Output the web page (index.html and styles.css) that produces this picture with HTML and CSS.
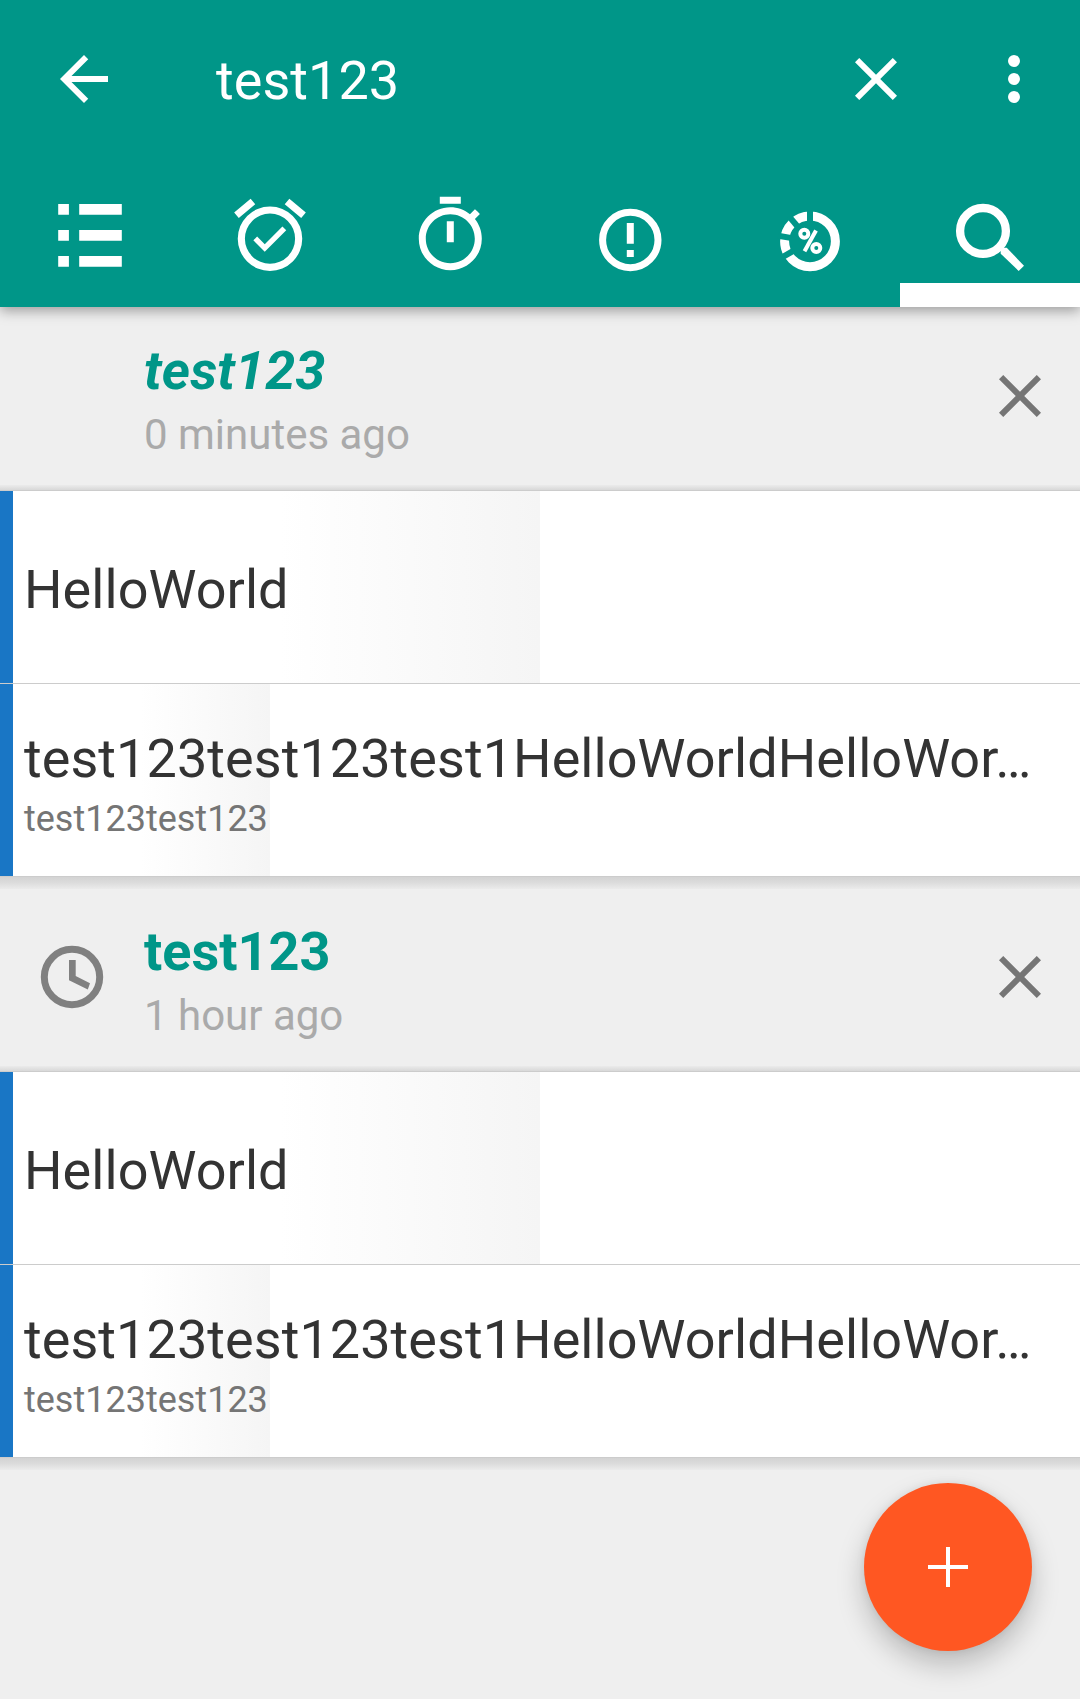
FILE: index.html
```html
<!DOCTYPE html>
<html lang="en">
<head>
<meta charset="utf-8">
<title>Search</title>
<link rel="stylesheet" href="styles.css">
</head>
<body>
<svg class="defs" aria-hidden="true">
  <symbol id="close" viewBox="0 0 24 24"><path d="M19 6.41 17.59 5 12 10.59 6.41 5 5 6.41 10.59 12 5 17.59 6.41 19 12 13.41 17.59 19 19 17.59 13.41 12z"/></symbol>
</svg>
<header class="app-bar">
  <div class="toolbar">
    <svg class="icon back" viewBox="0 0 24 24"><path d="M20 11H7.83l5.59-5.59L12 4l-8 8 8 8 1.41-1.41L7.83 13H20v-2z"/></svg>
    <div class="query">test123</div>
    <svg class="icon"><use href="#close"/></svg>
    <svg class="icon more" viewBox="0 0 24 24"><path d="M12 8a2 2 0 1 0 0-4 2 2 0 0 0 0 4zm0 2a2 2 0 1 0 0 4 2 2 0 0 0 0-4zm0 6a2 2 0 1 0 0 4 2 2 0 0 0 0-4z"/></svg>
  </div>
  <nav class="tabs">
    <a class="tab"><svg viewBox="0 168 180 139"><path d="M58.200 204h10.700v10.800H58.200zM79.200 204h42.600v10.800H79.200zM58.200 230h10.700v10.800H58.200zM79.200 230h42.600v10.800H79.200zM58.200 256h10.700v10.800H58.200zM79.200 256h42.600v10.800H79.200z"/></svg></a>
    <a class="tab"><svg viewBox="0 168 180 139"><path transform="translate(47 192.100) scale(3.583)" d="M10.540 14.530 8.410 12.400 7.350 13.460 10.530 16.640 16.530 10.640 15.470 9.580zM12 20a7 7 0 0 1 0-14 7 7 0 0 1 0 14M12 4a9 9 0 0 0 0 18 9 9 0 0 0 0-18M7.880 3.390 6.600 1.860 2 5.710 3.290 7.240zM22 5.720 17.400 1.860 16.110 3.390 20.710 7.250z"/></svg></a>
    <a class="tab"><svg viewBox="0 168 180 139"><path transform="translate(48.300 193.200) scale(3.500)" d="M15 1H9v2h6V1zm-4 13h2V8h-2v6zm8.030-6.610 1.420-1.420c-.43-.51-.9-.99-1.410-1.410l-1.420 1.420C16.070 4.740 14.120 4 12 4c-4.970 0-9 4.030-9 9s4.020 9 9 9 9-4.030 9-9c0-2.120-.74-4.070-1.970-5.610zM12 20c-3.870 0-7-3.130-7-7s3.130-7 7-7 7 3.130 7 7-3.130 7-7 7z"/></svg></a>
    <a class="tab"><svg viewBox="0 168 180 139"><circle class="ring" cx="90.300" cy="240" r="27.700" stroke-width="7"/><path d="M86.800 223h7v20.700h-7zM86.800 250h7v7h-7z"/></svg></a>
    <a class="tab"><svg viewBox="0 168 180 139"><circle class="ring" cx="90" cy="241.300" r="25.400" stroke-width="9"/><g class="cuts"><path id="cut" d="M90 209v14"/><use href="#cut" transform="rotate(-40 90 241.300)"/><use href="#cut" transform="rotate(-80 90 241.300)"/><use href="#cut" transform="rotate(-120 90 241.300)"/></g><g class="percent"><circle cx="84.300" cy="233.700" r="4"/><circle cx="96.300" cy="248" r="4"/><path d="M96 230.500 84.500 251.200"/></g></svg></a>
    <a class="tab active"><svg viewBox="0 168 180 139"><circle class="ring" cx="83" cy="230.900" r="22.900" stroke-width="8.300"/><path d="M102.700 247.700h4L124 265.700l-5.300 5.300-18-17.300V250z"/></svg></a>
  </nav>
</header>
<main class="results">
  <section class="group">
    <div class="group-head">
      <div class="lead"></div>
      <div class="info"><h2 class="name recent">test123</h2><p class="when">0 minutes ago</p></div>
      <svg class="icon"><use href="#close"/></svg>
    </div>
    <div class="card">
      <div class="row half"><div class="title">HelloWorld</div></div>
      <div class="row quarter"><div class="title">test123test123test1HelloWorldHelloWor…</div><div class="note">test123test123</div></div>
    </div>
  </section>
  <section class="group">
    <div class="group-head">
      <div class="lead"><svg class="clock" viewBox="0 0 64 64"><circle cx="32" cy="32" r="27.700"/><path d="M29 15h6.700v16L50 38.300l-2.200 6.300L29 35.300z"/></svg></div>
      <div class="info"><h2 class="name">test123</h2><p class="when">1 hour ago</p></div>
      <svg class="icon"><use href="#close"/></svg>
    </div>
    <div class="card">
      <div class="row half"><div class="title">HelloWorld</div></div>
      <div class="row quarter"><div class="title">test123test123test1HelloWorldHelloWor…</div><div class="note">test123test123</div></div>
    </div>
  </section>
</main>
<div class="fab"><svg viewBox="0 0 42 42"><path d="M1 19h18V1h4v18h18v4H23v18h-4V23H1z"/></svg></div>
</body>
</html>
```
FILE: styles.css
```css
* { box-sizing: border-box; margin: 0; padding: 0; }

body {
  width: 1080px;
  height: 1699px;
  overflow: hidden;
  background: #efefef;
  font-family: Roboto, "Liberation Sans", sans-serif;
}

.defs { display: none; }

.icon { width: 72px; height: 72px; flex: none; fill: currentColor; }

/* App bar */
.app-bar {
  position: relative;
  z-index: 2;
  height: 307px;
  background: #009688;
  color: #fff;
  box-shadow: 0 4px 12px rgba(0, 0, 0, .34);
}

.toolbar {
  display: flex;
  align-items: center;
  height: 168px;
  padding: 0 30px 10px 48px;
}

.query {
  flex: 1;
  margin-left: 96px;
  padding-top: 4px;
  font-size: 54px;
  line-height: 64px;
  letter-spacing: .05px;
}

.more { margin-left: 66px; }

.tabs { display: flex; height: 139px; }
.tab { width: 180px; }
.tab svg { display: block; width: 180px; height: 139px; fill: #fff; }
.tab .ring { fill: none; stroke: #fff; }
.cuts { stroke: #009688; stroke-width: 6px; }
.percent { fill: none; stroke: #fff; stroke-width: 4px; }
.active { box-shadow: inset 0 -24px #fff; }

/* Result groups */
.results { margin-top: -11px; }

.group-head {
  display: flex;
  align-items: center;
  height: 194px;
  padding: 6px 24px 0 0;
  color: #757575;
}

.lead { width: 144px; padding-left: 40px; }
.clock { display: block; width: 64px; height: 64px; fill: #808080; }
.clock circle { fill: none; stroke: #808080; stroke-width: 7px; }
.info { flex: 1; padding-top: 6px; }
.name { color: #009688; font-size: 54px; font-weight: 700; line-height: 64px; }
.recent { font-style: italic; letter-spacing: .1px; }
.when { margin-top: 7px; color: #aaa; font-size: 42px; line-height: 50px; }

.card {
  position: relative;
  border-top: 1px solid #ccc;
}

/* Shaded strips above and below a card */
.card::before,
.card::after {
  content: "";
  position: absolute;
  left: 0;
  right: 0;
}

.card::before {
  bottom: 100%;
  height: 5px;
  margin-bottom: 1px;
  background: linear-gradient(#ebebeb, #d8d8d8);
}

.card::after {
  top: 100%;
  height: 12px;
  background: linear-gradient(#d3d3d3, #dbdbdb 45%, #ebebeb);
}

.row {
  display: flex;
  flex-direction: column;
  justify-content: center;
  height: 193px;
  padding: 6px 0 0 24px;
  border-bottom: 1px solid #ccc;
  background:
    linear-gradient(#1976c5, #1976c5) 0 0 / 13px 100% no-repeat,
    linear-gradient(90deg, #fff 52%, #f5f5f5) 0 0 / var(--fill) 100% no-repeat,
    #fff;
  white-space: nowrap;
}

.half { --fill: 540px; }
.quarter { --fill: 270px; }
.title { color: #333; font-size: 54px; line-height: 64px; letter-spacing: .06px; }
.note { margin-top: 7px; color: #757575; font-size: 36px; line-height: 42px; }

/* Floating action button */
.fab {
  position: absolute;
  left: 864px;
  top: 1483px;
  display: grid;
  place-items: center;
  width: 168px;
  height: 168px;
  border-radius: 50%;
  background: #ff5722;
  box-shadow: 0 14px 28px rgba(0, 0, 0, .22), 0 0 8px rgba(0, 0, 0, .08);
}

.fab svg { width: 42px; height: 42px; fill: #fff; }
```
